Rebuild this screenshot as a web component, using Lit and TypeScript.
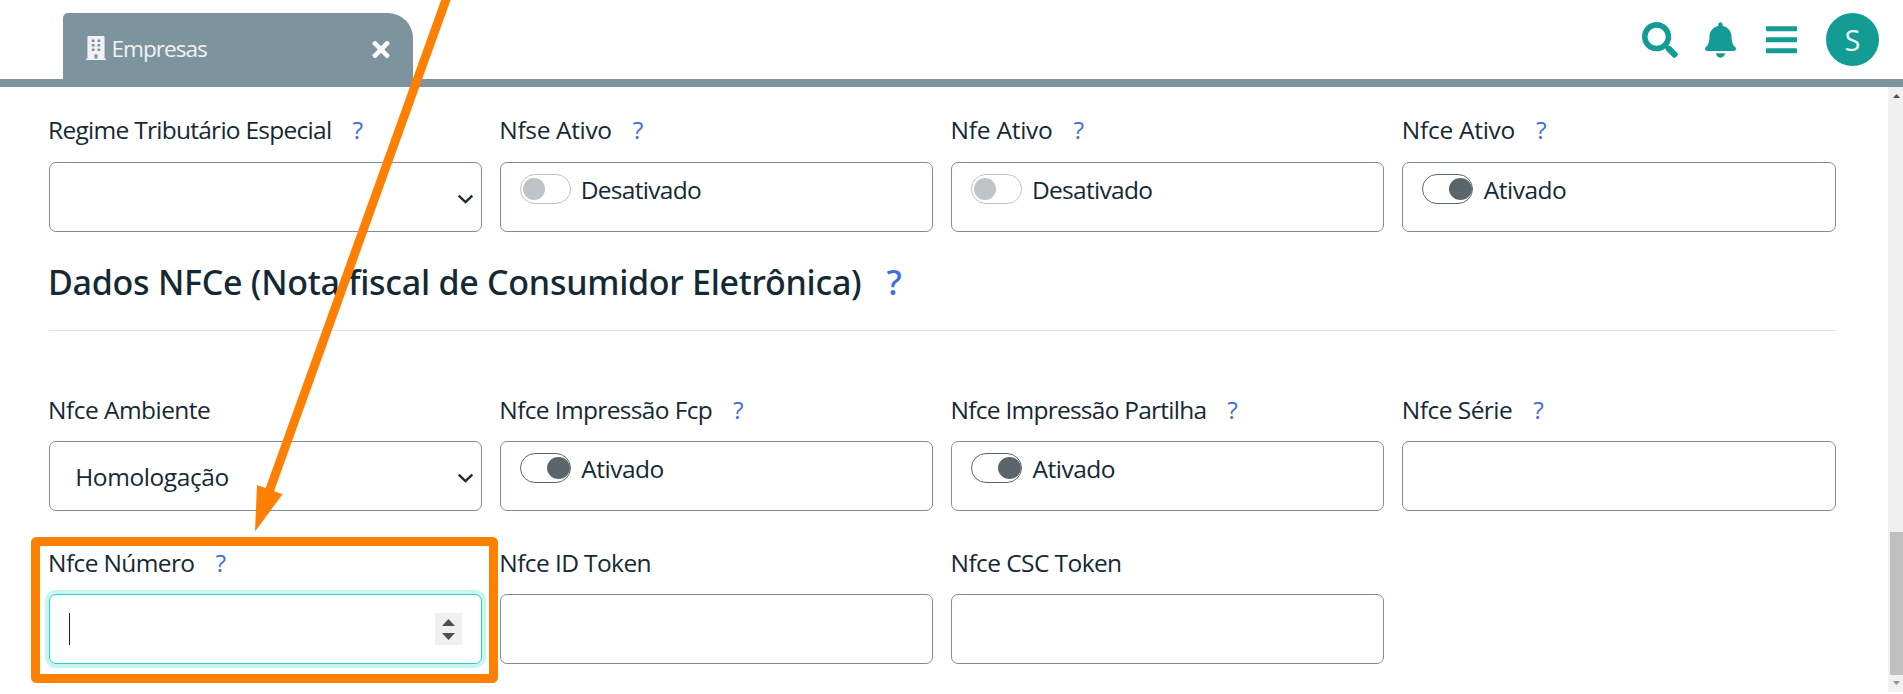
import { LitElement, html, css, svg, nothing } from "lit";
import { customElement, property } from "lit/decorators.js";
import { classMap } from "lit/directives/class-map.js";

type Kind = "select" | "toggle" | "text" | "number";

interface Field {
  label: string;
  tracking: number;
  kind: Kind;
  help?: boolean;
  on?: boolean;
  value?: string;
}

const STATUS: Field[] = [
  { label: "Regime Tributário Especial", tracking: -0.73, kind: "select", help: true },
  { label: "Nfse Ativo", tracking: -0.35, kind: "toggle", help: true },
  { label: "Nfe Ativo", tracking: -0.25, kind: "toggle", help: true },
  { label: "Nfce Ativo", tracking: -0.28, kind: "toggle", help: true, on: true },
];

const NFCE: Field[] = [
  { label: "Nfce Ambiente", tracking: -0.54, kind: "select", value: "Homologação" },
  { label: "Nfce Impressão Fcp", tracking: -0.64, kind: "toggle", help: true, on: true },
  { label: "Nfce Impressão Partilha", tracking: -0.75, kind: "toggle", help: true, on: true },
  { label: "Nfce Série", tracking: -0.53, kind: "text", help: true },
  { label: "Nfce Número", tracking: -0.62, kind: "number", help: true },
  { label: "Nfce ID Token", tracking: -0.6, kind: "text" },
  { label: "Nfce CSC Token", tracking: -0.58, kind: "text" },
];

@customElement("form-field")
class FormField extends LitElement {
  @property({ attribute: false }) field!: Field;

  static styles = css`
    :host { display: block; min-width: 0; }
    .label { display: flex; height: 37px; line-height: 37px; white-space: nowrap; margin: 0 0 var(--label-gap, 14px) -0.6px; }
    .help { color: #3f6fdc; margin-left: 21px; }
    .box { box-sizing: border-box; height: 70px; border: 1px solid #7d8ba6; border-radius: 7px; background: #fff; display: flex; }
    .select { align-items: center; justify-content: space-between; padding: 0 7px 0 25.5px; }
    .value { letter-spacing: -0.41px; line-height: 37px; padding-top: 1px; }
    .chevron { display: block; width: 17px; height: 10px; margin-top: 3px; }
    .toggle { align-items: flex-start; padding: 11px 0 0 19px; }
    .track { box-sizing: border-box; width: 51px; height: 30px; border: 1px solid #bfc3c7; border-radius: 15px; display: flex; align-items: center; padding: 0 2px; }
    .knob { width: 22px; height: 22px; border-radius: 50%; background: #bfc4c8; }
    .track.on { border-color: #5b666c; justify-content: flex-end; padding: 0; }
    .on .knob { width: 23px; background: #5b666c; }
    .state { margin: -3px 0 0 9.8px; line-height: 37px; letter-spacing: -0.7px; }
    .state.active { letter-spacing: -0.5px; margin-left: 10.3px; }
    .number { align-items: center; justify-content: space-between; padding: 0 19px; border-color: #2bd3c6; box-shadow: 0 0 0 4px #c6f6f2; }
    .caret { width: 1px; height: 32px; background: #12232e; }
    .spinner { display: block; width: 27px; height: 32px; background: #f0f0f0; }
  `;

  private control() {
    const f = this.field;
    if (f.kind === "select") {
      return html`<div class="box select">
        <span class="value">${f.value ?? nothing}</span>
        <svg class="chevron" viewBox="0 0 17 10"><path d="M1.7 1.6 8.5 8.2 15.3 1.6" fill="none" stroke="#1b2b38" stroke-width="2.3" /></svg>
      </div>`;
    }
    if (f.kind === "toggle") {
      return html`<div class="box toggle">
        <span class=${classMap({ track: true, on: !!f.on })}><span class="knob"></span></span>
        <span class=${classMap({ state: true, active: !!f.on })}>${f.on ? "Ativado" : "Desativado"}</span>
      </div>`;
    }
    if (f.kind === "number") {
      return html`<div class="box number">
        <span class="caret"></span>
        <svg class="spinner" viewBox="0 0 27 32"><path d="M7 13 13.5 6 20 13ZM7 20 13.5 27 20 20Z" fill="#505050" /></svg>
      </div>`;
    }
    return html`<div class="box"></div>`;
  }

  render() {
    const f = this.field;
    return html`
      <div class="label">
        <span style="letter-spacing:${f.tracking}px">${f.label}</span>
        ${f.help ? html`<span class="help">?</span>` : nothing}
      </div>
      ${this.control()}
    `;
  }
}

const WINDOWS = [76, 172, 268].flatMap((y) => [128, 256].map((x) => ({ x, y })));

@customElement("app-root")
class AppRoot extends LitElement {
  static styles = css`
    :host { display: block; position: relative; height: 694px; overflow: hidden; background: #fff; color: #152935; font-family: "Open Sans", "Noto Sans", sans-serif; font-size: 24.5px; }
    .header { box-sizing: border-box; height: 87px; border-bottom: 8px solid #7d939d; display: flex; justify-content: space-between; padding: 13px 24px 0 63px; }
    .tab { box-sizing: border-box; width: 350px; height: 66px; background: #7d939d; border-radius: 5px 25px 0 0; display: flex; align-items: center; padding: 5px 23px 0; color: #f1f2f3; }
    .building { width: 20px; height: 24px; display: block; margin-top: -1px; }
    .title { font-size: 22.6px; letter-spacing: -1px; margin-left: 5.5px; flex: 1; }
    .close { width: 18px; height: 25px; display: block; fill: #fff; margin-top: 2px; }
    .actions { display: flex; align-items: flex-start; color: #139c93; fill: currentColor; }
    .search { width: 36px; height: 36px; margin: 9px 27px 0 0; }
    .bell { width: 31px; height: 36px; margin: 9px 30px 0 0; }
    .bars { width: 31px; height: 28px; margin: 13px 29px 0 0; }
    .avatar { width: 53px; height: 53px; border-radius: 50%; background: #139c93; color: #eef1f1; display: flex; align-items: center; justify-content: center; font-size: 29px; }
    .body { display: flex; justify-content: space-between; height: 605px; }
    .form { width: 1787px; padding: 24px 0 0 48.7px; }
    .grid { display: grid; grid-template-columns: repeat(4, 1fr); column-gap: 18px; row-gap: 32px; }
    .heading { margin: 27px 0 0 -0.7px; font: 500 34px/46px "Noto Sans", "Open Sans", sans-serif; letter-spacing: -0.27px; display: flex; white-space: nowrap; }
    .heading .help { color: #3f6fdc; margin-left: 25px; }
    .rule { height: 1px; background: #e1e3e5; margin: 25px 0 60px; }
    .nfce { --label-gap: 13px; row-gap: 33px; }
    .scroll { box-sizing: border-box; width: 15px; background: #f0f0f0; display: flex; flex-direction: column; align-items: center; padding: 7px 0 6px 2px; }
    .arrow { width: 7px; height: 4px; display: block; }
    .thumb { width: 13px; height: 143px; background: #c0c0c0; margin: 434px 0 6px; }
    .annotation { position: absolute; left: 0; top: 0; width: 520px; height: 694px; pointer-events: none; }
  `;

  render() {
    return html`
      <header class="header">
        <div class="tab">
          <svg class="building" viewBox="0 0 448 512" preserveAspectRatio="none">
            <path fill="#f1f2f3" d="M436 480h-20V24c0-13-11-24-24-24H56C43 0 32 11 32 24v456H12c-7 0-12 5-12 12v20h448v-20c0-7-5-12-12-12z" />
            ${WINDOWS.map((w) => svg`<rect x=${w.x} y=${w.y} width="64" height="52" rx="10" fill="#7d939d" />`)}
            <rect x="190" y="392" width="68" height="88" fill="#7d939d" />
          </svg>
          <span class="title">Empresas</span>
          <svg class="close" viewBox="0 0 352 512"><path d="M242.72 256l100.07-100.07c12.28-12.28 12.28-32.19 0-44.48l-22.24-22.24c-12.28-12.28-32.19-12.28-44.48 0L176 189.28 75.93 89.21c-12.28-12.28-32.19-12.28-44.48 0L9.21 111.45c-12.28 12.28-12.28 32.19 0 44.48L109.28 256 9.21 356.07c-12.28 12.28-12.28 32.19 0 44.48l22.24 22.24c12.28 12.28 32.2 12.28 44.48 0L176 322.72l100.07 100.07c12.28 12.28 32.2 12.28 44.48 0l22.24-22.24c12.28-12.28 12.28-32.19 0-44.48L242.72 256z" /></svg>
        </div>
        <div class="actions">
          <svg class="search" viewBox="0 0 512 512"><path d="M505 442.7L405.3 343c-4.5-4.5-10.6-7-17-7H372c27.6-35.3 44-79.7 44-128C416 93.1 322.9 0 208 0S0 93.1 0 208s93.1 208 208 208c48.3 0 92.7-16.4 128-44v16.3c0 6.4 2.5 12.5 7 17l99.7 99.7c9.4 9.4 24.6 9.4 33.9 0l28.3-28.3c9.4-9.4 9.4-24.6.1-34zM208 336c-70.7 0-128-57.2-128-128 0-70.7 57.2-128 128-128 70.7 0 128 57.2 128 128 0 70.7-57.2 128-128 128z" /></svg>
          <svg class="bell" viewBox="0 0 448 512"><path d="M224 512c35.32 0 63.97-28.65 63.97-64H160.03c0 35.35 28.65 64 63.97 64zm215.39-149.71c-19.32-20.76-55.47-51.99-55.47-154.29 0-77.7-54.48-139.9-127.94-155.16V32c0-17.67-14.32-32-31.98-32s-31.98 14.33-31.98 32v20.84C118.56 68.1 64.08 130.3 64.08 208c0 102.3-36.15 133.53-55.47 154.29-6 6.45-8.66 14.16-8.61 21.71.11 16.4 12.98 32 32.1 32h383.8c19.12 0 32-15.6 32.1-32 .05-7.55-2.61-15.27-8.61-21.71z" /></svg>
          <svg class="bars" viewBox="0 0 31 28"><rect y="0.3" width="31" height="5" rx="0.8" /><rect y="11.3" width="31" height="5" rx="0.8" /><rect y="22.3" width="31" height="5" rx="0.8" /></svg>
          <div class="avatar">S</div>
        </div>
      </header>
      <div class="body">
        <main class="form">
          <div class="grid">${STATUS.map((f) => html`<form-field .field=${f}></form-field>`)}</div>
          <h2 class="heading"><span>Dados NFCe (Nota fiscal de Consumidor Eletrônica)</span><span class="help">?</span></h2>
          <div class="rule"></div>
          <div class="grid nfce">${NFCE.map((f) => html`<form-field .field=${f}></form-field>`)}</div>
        </main>
        <aside class="scroll">
          <svg class="arrow" viewBox="0 0 7 4"><path d="M0 4 3.5 0 7 4Z" fill="#505050" /></svg>
          <div class="thumb"></div>
          <svg class="arrow" viewBox="0 0 7 4"><path d="M0 0 3.5 4 7 0Z" fill="#909090" /></svg>
        </aside>
      </div>
      <svg class="annotation" viewBox="0 0 520 694">
        <rect x="35.5" y="541.5" width="458" height="137" rx="1" fill="none" stroke="#ff8000" stroke-width="9" stroke-linejoin="round" />
        <path d="M446.6-2 269 492" stroke="#ff8000" stroke-width="8.9" />
        <path d="M255 531.5 257 485 282.5 494.3Z" fill="#ff8000" />
      </svg>
    `;
  }
}
